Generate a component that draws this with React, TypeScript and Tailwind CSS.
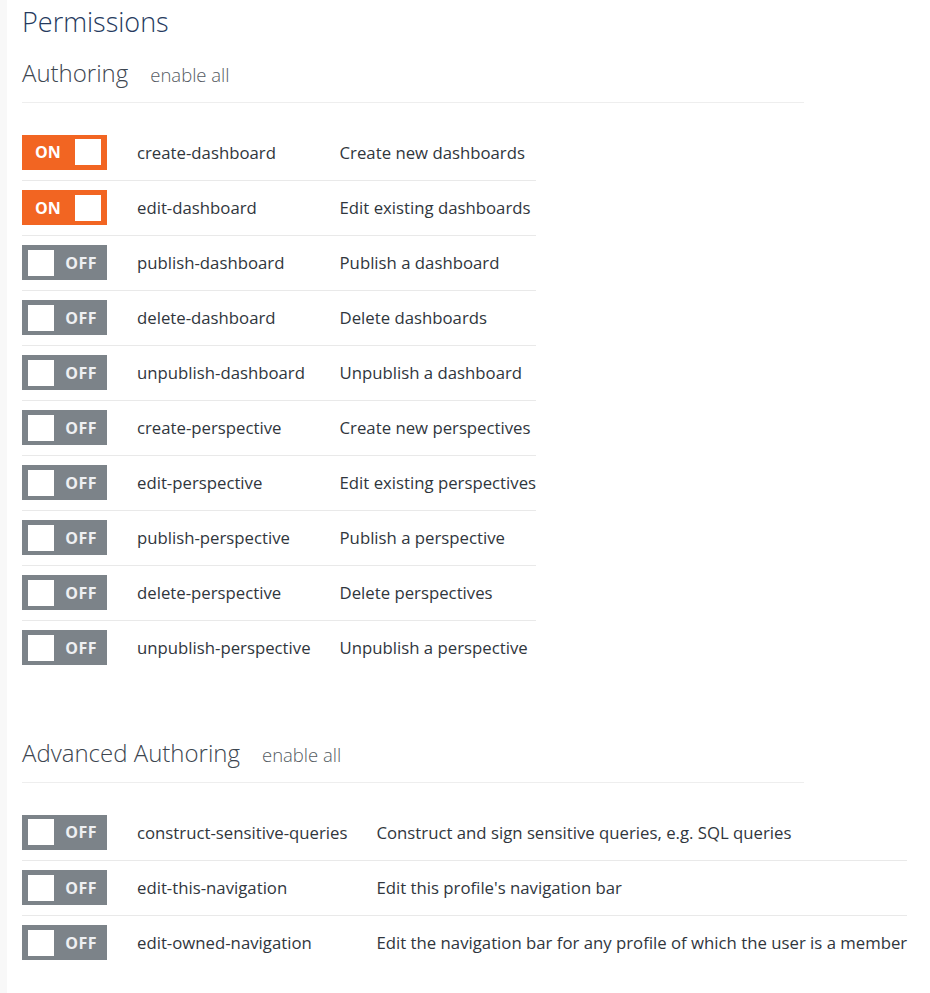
import React from "react";

type Perm = { name: string; desc: string; on: boolean };

const authoring: Perm[] = [
  { name: "create-dashboard", desc: "Create new dashboards", on: true },
  { name: "edit-dashboard", desc: "Edit existing dashboards", on: true },
  { name: "publish-dashboard", desc: "Publish a dashboard", on: false },
  { name: "delete-dashboard", desc: "Delete dashboards", on: false },
  { name: "unpublish-dashboard", desc: "Unpublish a dashboard", on: false },
  { name: "create-perspective", desc: "Create new perspectives", on: false },
  { name: "edit-perspective", desc: "Edit existing perspectives", on: false },
  { name: "publish-perspective", desc: "Publish a perspective", on: false },
  { name: "delete-perspective", desc: "Delete perspectives", on: false },
  { name: "unpublish-perspective", desc: "Unpublish a perspective", on: false },
];

const advanced: Perm[] = [
  {
    name: "construct-sensitive-queries",
    desc: "Construct and sign sensitive queries, e.g. SQL queries",
    on: false,
  },
  { name: "edit-this-navigation", desc: "Edit this profile's navigation bar", on: false },
  {
    name: "edit-owned-navigation",
    desc: "Edit the navigation bar for any profile of which the user is a member",
    on: false,
  },
];

function Toggle({ on }: { on: boolean }) {
  if (on) {
    return (
      <div className="flex items-center w-[85px] h-[35px] bg-[#f26522] pl-[13px] pr-[6px]">
        <span className="text-white font-bold text-[16px]">ON</span>
        <span className="ml-auto w-[26px] h-[26px] bg-white" />
      </div>
    );
  }
  return (
    <div className="flex items-center w-[85px] h-[35px] bg-[#7c8389] pl-[6px] pr-[10px]">
      <span className="w-[26px] h-[26px] bg-white" />
      <span className="ml-auto text-[#eef0f2] font-bold text-[16px] tracking-[0.5px]">OFF</span>
    </div>
  );
}

function Section({ title, perms }: { title: string; perms: Perm[] }) {
  return (
    <div>
      <div className="flex items-baseline gap-[22px] max-w-[782px] border-b border-[#eeeeee] pb-[11px]">
        <h2 className="text-[24px] font-light text-[#3d4650] leading-[36px]">{title}</h2>
        <button className="text-[18.5px] font-light text-[#555b62]">enable all</button>
      </div>
      <table className="mt-[22px] border-collapse">
        <tbody>
          {perms.map((p, idx) => (
            <tr key={p.name} className={idx > 0 ? "border-t border-[#e9e9e9]" : ""}>
              <td className="h-[55px] pr-[30px] align-middle">
                <Toggle on={p.on} />
              </td>
              <td className="pr-[29px] align-middle text-[#30363d] whitespace-nowrap">{p.name}</td>
              <td className="align-middle text-[#30363d] whitespace-nowrap">{p.desc}</td>
            </tr>
          ))}
        </tbody>
      </table>
    </div>
  );
}

export default function App() {
  return (
    <div
      className="min-h-screen bg-white border-l-[7px] border-[#f8f8f8] pl-[15px] pt-[2px] text-[16.75px]"
      style={{ fontFamily: '"Open Sans", "Noto Sans", sans-serif' }}
    >
      <h1 className="text-[27px] font-light text-[#253a5e] leading-[40px]">Permissions</h1>
      <div className="mt-[13px]">
        <Section title="Authoring" perms={authoring} />
      </div>
      <div className="mt-[60px]">
        <Section title="Advanced Authoring" perms={advanced} />
      </div>
    </div>
  );
}
